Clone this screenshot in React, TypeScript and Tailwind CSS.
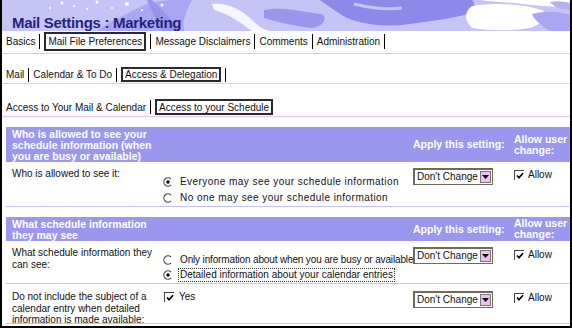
import React from 'react';

const font = "font-['Liberation_Sans',Arial,sans-serif]";

function Banner() {
  return (
    <div className="relative h-[31px] overflow-hidden bg-[#c6c4f5]">
      <svg className="absolute inset-0" width="572" height="31" viewBox="0 0 572 31">
        <path d="M95 31 C110 20 125 14 140 6 C150 2 160 0 175 0 L190 0 C185 10 180 20 182 31 Z" fill="#aaa6f1" />
        <path d="M150 0 C158 8 165 14 170 22 L178 31 L160 31 C156 22 150 12 145 0 Z" fill="#9894ec" />
        <path d="M210 4 C225 2 240 10 250 20 C256 26 262 30 268 31 L250 31 C240 24 228 14 212 10 Z" fill="#ffffff" opacity="0.85" />
        <path d="M262 10 C280 6 300 12 320 14 C326 18 322 26 310 28 C292 26 276 22 262 18 Z" fill="#9a96ed" />
        <path d="M318 0 L470 0 C476 6 470 14 458 16 C440 20 420 22 400 25 C380 27 360 24 345 18 C335 12 326 6 318 0 Z" fill="#8d89e8" />
        <path d="M352 4 C368 8 384 10 400 8" stroke="#c6c4f5" strokeWidth="3" fill="none" />
        <path d="M470 6 C490 2 520 4 540 10 C548 16 540 24 528 28 C510 31 490 31 470 28 C462 20 462 12 470 6 Z" fill="#ffffff" />
        <path d="M478 0 L572 0 L572 6 C556 8 540 6 520 4 C505 2 490 2 478 0 Z" fill="#ffffff" />
        <path d="M530 14 C545 10 560 12 572 16 L572 31 L548 31 C540 26 532 20 530 14 Z" fill="#aaa6f1" />
        <path d="M548 2 C556 0 566 2 572 4 L572 10 C562 10 552 8 548 2 Z" fill="#b4b0f3" />
        <circle cx="60" cy="3" r="1.5" fill="#fff" />
        <circle cx="72" cy="6" r="1" fill="#fff" />
        <circle cx="95" cy="2" r="1.5" fill="#fff" />
        <circle cx="110" cy="8" r="1" fill="#fff" />
        <circle cx="125" cy="4" r="2" fill="#fff" />
        <circle cx="140" cy="10" r="1" fill="#fff" />
        <circle cx="160" cy="5" r="1.5" fill="#fff" />
        <circle cx="48" cy="8" r="1" fill="#fff" />
        <circle cx="85" cy="9" r="1" fill="#fff" />
      </svg>
      <div className={`relative pl-[10px] pt-[14px] text-[15px] font-bold leading-[17px] tracking-[-0.3px] text-[#24247e] ${font}`}>
        Mail Settings : Marketing
      </div>
    </div>
  );
}

function Sep({ h }: { h: string }) {
  return <span className={`w-px bg-black ${h}`} />;
}

interface TabRowProps {
  tabs: string[];
  active: number;
  boxH: string;
  sepH: string;
  trailing: boolean;
}

function TabRow({ tabs, active, boxH, sepH, trailing }: TabRowProps) {
  return (
    <div className="flex items-center gap-[4px] pl-[4px]">
      {tabs.map((t, i) => (
        <React.Fragment key={t}>
          {i > 0 && <Sep h={sepH} />}
          {i === active ? (
            <span className={`flex items-center border-2 border-[#2a2a2a] px-[2px] ${boxH}`}>{t}</span>
          ) : (
            <span>{t}</span>
          )}
        </React.Fragment>
      ))}
      {trailing && <Sep h={sepH} />}
    </div>
  );
}

function Radio({ checked }: { checked?: boolean }) {
  return (
    <svg width="10" height="10" viewBox="0 0 10 10" className="shrink-0">
      <circle cx="5" cy="5" r="4.3" fill="#fff" />
      <path d="M8 2 A4.2 4.2 0 1 0 8 8" stroke="#555" strokeWidth="1.2" fill="none" />
      {checked && <circle cx="5" cy="5" r="1.7" fill="#000" />}
    </svg>
  );
}

function Check() {
  return (
    <span className="flex h-[10px] w-[10px] shrink-0 items-center justify-center border-l-[1.5px] border-t-[1.5px] border-[#444] bg-white">
      <svg width="8" height="8" viewBox="0 0 8 8">
        <path d="M1 3.5 L3 5.7 L7 1.2" stroke="#000" strokeWidth="1.7" fill="none" />
      </svg>
    </span>
  );
}

function Select() {
  return (
    <div className="flex h-[17px] w-[80px] items-center justify-between whitespace-nowrap border border-l-2 border-t-2 border-[#6f6a55] bg-white pl-[2px] pr-[1px] text-[10px]">
      <span>Don't Change</span>
      <span className="flex h-[12px] w-[11px] items-center justify-center border border-[#777] bg-[#f2bdf2]">
        <svg width="7" height="4" viewBox="0 0 7 4">
          <path d="M0 0 L7 0 L3.5 4 Z" fill="#000" />
        </svg>
      </span>
    </div>
  );
}

function Allow() {
  return (
    <div className="flex items-center gap-[4px] pl-[1px]">
      <Check />
      <span>Allow</span>
    </div>
  );
}

function SectionHeader({ lines, h }: { lines: string[]; h: string }) {
  return (
    <div className={`grid grid-cols-[153px_254px_100px_1fr] bg-[#9b97ef] text-[10.5px] font-bold leading-[11px] text-white ${h}`}>
      <div className="pl-[6px] pt-[2px]">
        {lines.map((l) => (
          <div key={l}>{l}</div>
        ))}
      </div>
      <div />
      <div className="flex items-center">Apply this setting:</div>
      <div className="flex flex-col justify-center pl-[1px]">
        <div>Allow user</div>
        <div>change:</div>
      </div>
    </div>
  );
}

export default function App() {
  return (
    <div className={`h-[328px] w-[572px] overflow-hidden border-x-2 border-b-2 border-black bg-white text-[10px] text-[#111] ${font}`}>
      <Banner />
      <div className="border-b border-[#efc3ef] pb-[2px] pt-[1px]">
        <TabRow
          tabs={['Basics', 'Mail File Preferences', 'Message Disclaimers', 'Comments', 'Administration']}
          active={1}
          boxH="h-[19px]"
          sepH="h-[15px]"
          trailing
        />
      </div>
      <div className="border-b border-[#efc3ef] pb-[1px] pt-[13px]">
        <TabRow tabs={['Mail', 'Calendar & To Do', 'Access & Delegation']} active={2} boxH="h-[15px]" sepH="h-[14px]" trailing />
      </div>
      <div className="border-b border-[#efc3ef] pb-[1px] pt-[15px]">
        <TabRow tabs={['Access to Your Mail & Calendar', 'Access to your Schedule']} active={1} boxH="h-[16px]" sepH="h-[14px]" trailing={false} />
      </div>

      <div className="ml-[4px] mt-[10px]">
        <SectionHeader
          lines={['Who is allowed to see your', 'schedule information (when', 'you are busy or available)']}
          h="h-[35px]"
        />
        <div className="grid h-[45px] grid-cols-[153px_254px_100px_1fr] border-b border-[#c6c3f3] leading-[12px]">
          <div className="pl-[6px] pt-[6px]">Who is allowed to see it:</div>
          <div className="flex flex-col gap-[4px] whitespace-nowrap pl-[4px] pt-[14px] tracking-[0.45px]">
            <div className="flex items-center gap-[7px]">
              <Radio checked />
              <span>Everyone may see your schedule information</span>
            </div>
            <div className="flex items-center gap-[7px]">
              <Radio />
              <span>No one may see your schedule information</span>
            </div>
          </div>
          <div className="pt-[6px]">
            <Select />
          </div>
          <div className="pt-[7px]">
            <Allow />
          </div>
        </div>

        <div className="h-[10px]" />

        <SectionHeader lines={['What schedule information', 'they may see']} h="h-[24px]" />
        <div className="grid h-[43px] grid-cols-[153px_254px_100px_1fr] border-b border-[#c6c3f3] leading-[12px]">
          <div className="pl-[6px] pt-[6px]">
            What schedule information they
            <br />
            can see:
          </div>
          <div className="flex flex-col gap-[2px] whitespace-nowrap pl-[4px] pt-[13px]">
            <div className="flex items-center gap-[7px]">
              <Radio />
              <span className="tracking-[-0.15px]">Only information about when you are busy or available</span>
            </div>
            <div className="flex items-center gap-[5px]">
              <Radio checked />
              <span className="border border-dotted border-[#333] px-[1px]">Detailed information about your calendar entries</span>
            </div>
          </div>
          <div className="pt-[6px]">
            <Select />
          </div>
          <div className="pt-[8px]">
            <Allow />
          </div>
        </div>

        <div className="grid h-[40px] grid-cols-[153px_254px_100px_1fr] border-b border-[#c6c3f3] leading-[11.5px]">
          <div className="pl-[6px] pt-[7px]">
            Do not include the subject of a
            <br />
            calendar entry when detailed
            <br />
            information is made available:
          </div>
          <div className="flex items-start gap-[5px] pl-[5px] pt-[8px]">
            <Check />
            <span className="-mt-[1px]">Yes</span>
          </div>
          <div className="pt-[7px]">
            <Select />
          </div>
          <div className="pt-[8px]">
            <Allow />
          </div>
        </div>
      </div>
    </div>
  );
}
